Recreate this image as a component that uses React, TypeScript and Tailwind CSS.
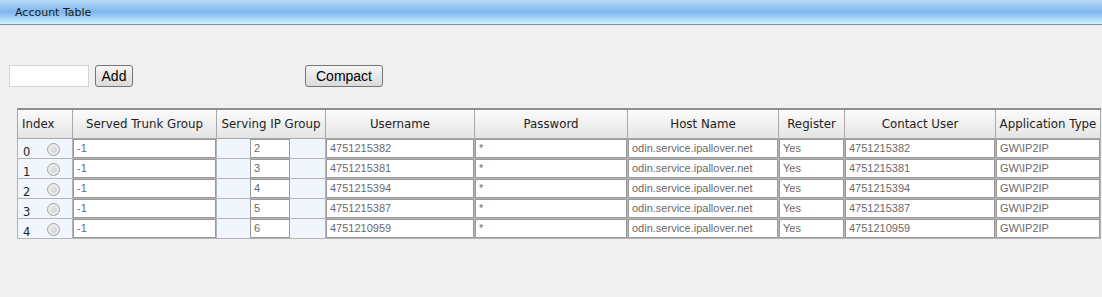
const columns = [
  { label: "Index", width: 55 },
  { label: "Served Trunk Group", width: 144 },
  { label: "Serving IP Group", width: 109 },
  { label: "Username", width: 149 },
  { label: "Password", width: 153 },
  { label: "Host Name", width: 151 },
  { label: "Register", width: 66 },
  { label: "Contact User", width: 151 },
  { label: "Application Type", width: 105 },
];

const rows = [
  { ip: "2", user: "4751215382" },
  { ip: "3", user: "4751215381" },
  { ip: "4", user: "4751215394" },
  { ip: "5", user: "4751215387" },
  { ip: "6", user: "4751210959" },
];

function Cell({ value }: { value: string }) {
  return (
    <td className="p-0 border border-[#b4b4b4] bg-white">
      <div className="h-[19px] border border-[#9a9a9a] bg-white px-[3px] text-[11px] leading-[17px] text-[#6a6a6a] font-['Liberation_Sans',Arial,sans-serif] overflow-hidden whitespace-nowrap">
        {value}
      </div>
    </td>
  );
}

function Radio() {
  return (
    <span className="inline-block h-[13px] w-[13px] rounded-full border border-[#a4a4a4] bg-gradient-to-br from-[#f4f4f4] to-[#c8c8c8] shadow-[inset_0_0_0_2px_#ededed]" />
  );
}

export default function App() {
  return (
    <div className="h-[297px] w-[1102px] bg-[#f0f0f0] font-['DejaVu_Sans',Verdana,sans-serif]">
      <div className="h-[25px] border-b border-[#7e8e9c] bg-gradient-to-b from-[#b9d8f7] via-[#7db6ee] to-[#cff3ff] pl-[15px] text-[11px] leading-[26px] text-[#1a1a1a]">
        Account Table
      </div>

      <div className="flex items-center pt-[40px] pl-[9px]">
        <div className="h-[22px] w-[80px] border border-[#d4d4d4] bg-white" />
        <button className="ml-[6px] h-[22px] w-[38px] rounded-[3px] border border-[#767676] bg-gradient-to-b from-[#f6f6f6] to-[#dadada] text-[14px] text-black font-['Liberation_Sans',Arial,sans-serif]">
          Add
        </button>
        <button className="ml-[172px] h-[22px] w-[78px] rounded-[3px] border border-[#767676] bg-gradient-to-b from-[#f6f6f6] to-[#dadada] text-[14px] text-black font-['Liberation_Sans',Arial,sans-serif]">
          Compact
        </button>
      </div>

      <div className="pl-[17px] pt-[21px]">
        <table className="table-fixed border-collapse border border-[#8a8a8a] w-[1083px]">
          <colgroup>
            {columns.map((c) => (
              <col key={c.label} style={{ width: c.width }} />
            ))}
          </colgroup>
          <thead>
            <tr className="h-[29px]">
              {columns.map((c, i) => (
                <th
                  key={c.label}
                  className={`border border-[#a8a8a8] border-t-2 border-t-[#8e8e8e] bg-gradient-to-b from-[#fbfbfb] to-[#e4e4e4] p-0 pt-[2px] text-[11.8px] font-normal text-[#222] whitespace-nowrap ${
                    i === 0 ? "text-left pl-[4px]" : "text-center"
                  }`}
                >
                  {c.label}
                </th>
              ))}
            </tr>
          </thead>
          <tbody>
            {rows.map((r, i) => (
              <tr key={i} className="h-[20px]">
                <td className="border border-[#b4b4b4] bg-[#f1f5fc] p-0">
                  <div className="flex h-[19px] items-end pl-[5px] text-[11.5px] leading-[15px] text-[#222]">
                    <span className="w-[24px] translate-y-[2px]">{i}</span>
                    <span className="mb-[2px] flex">
                      <Radio />
                    </span>
                  </div>
                </td>
                <Cell value="-1" />
                <td className="border border-[#b4b4b4] bg-[#f1f5fc] p-0">
                  <div className="flex h-[19px] items-center pl-[33px]">
                    <div className="h-[19px] w-[40px] border border-[#9a9a9a] bg-white px-[3px] text-[11px] leading-[17px] text-[#6a6a6a] font-['Liberation_Sans',Arial,sans-serif]">
                      {r.ip}
                    </div>
                  </div>
                </td>
                <Cell value={r.user} />
                <Cell value="*" />
                <Cell value="odin.service.ipallover.net" />
                <Cell value="Yes" />
                <Cell value={r.user} />
                <Cell value="GW\IP2IP" />
              </tr>
            ))}
          </tbody>
        </table>
      </div>
    </div>
  );
}
